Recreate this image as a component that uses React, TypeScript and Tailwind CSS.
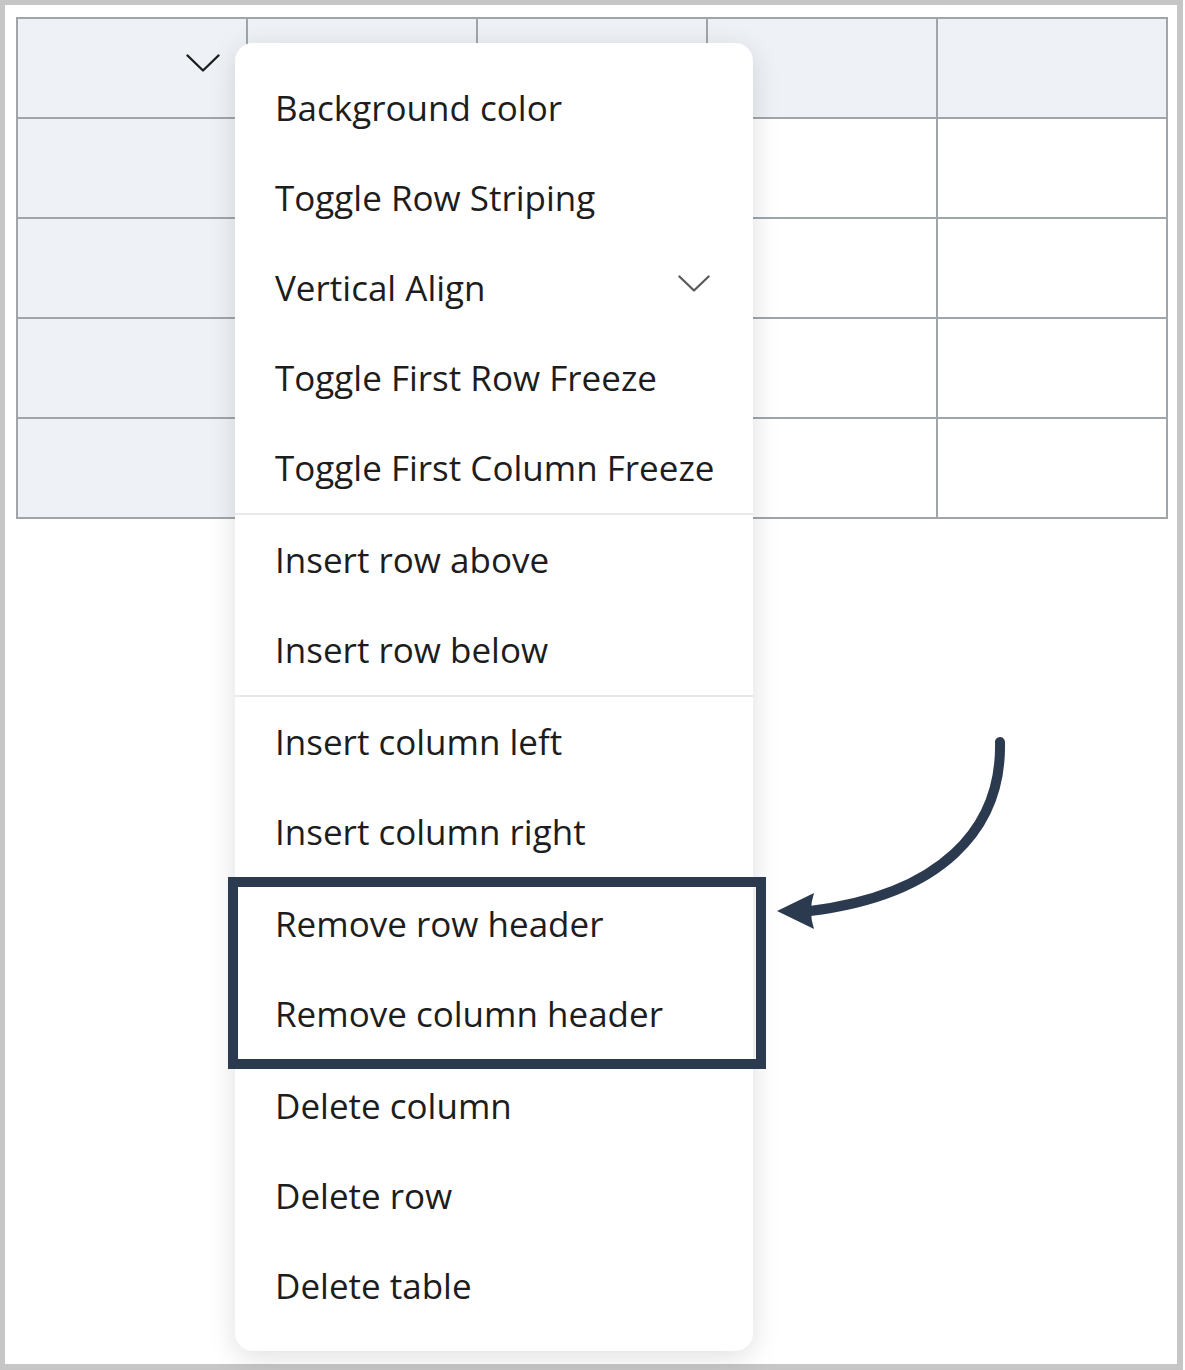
import { ReactNode } from 'react';

const ROWS = 5;
const COLS = 5;

type MenuEntry = { label: string; submenu?: boolean } | 'divider';

const menuEntries: MenuEntry[] = [
  { label: 'Background color' },
  { label: 'Toggle Row Striping' },
  { label: 'Vertical Align', submenu: true },
  { label: 'Toggle First Row Freeze' },
  { label: 'Toggle First Column Freeze' },
  'divider',
  { label: 'Insert row above' },
  { label: 'Insert row below' },
  'divider',
  { label: 'Insert column left' },
  { label: 'Insert column right' },
  'divider',
  { label: 'Remove row header' },
  { label: 'Remove column header' },
  'divider',
  { label: 'Delete column' },
  { label: 'Delete row' },
  { label: 'Delete table' },
];

function Chevron({ className }: { className?: string }) {
  return (
    <svg
      viewBox="0 0 34 18"
      className={className}
      fill="none"
      stroke="currentColor"
      strokeWidth={2.4}
      strokeLinecap="round"
      strokeLinejoin="round"
    >
      <path d="M1.5 1.5 L17 16.5 L32.5 1.5" />
    </svg>
  );
}

function Cell({ row, col, children }: { row: number; col: number; children?: ReactNode }) {
  const isHeader = row === 0 || col === 0;
  return (
    <div
      className={
        'relative h-[100px] border-r-2 border-b-2 border-[#a0a5aa] ' +
        (isHeader ? 'bg-[#eef2f7]' : 'bg-white')
      }
    >
      {children}
    </div>
  );
}

function TableGrid() {
  const cells = [];
  for (let r = 0; r < ROWS; r++) {
    for (let c = 0; c < COLS; c++) {
      cells.push(
        <Cell key={`${r}-${c}`} row={r} col={c}>
          {r === 0 && c === 0 && (
            <div className="flex justify-end pt-[35px] pr-[26px]">
              <Chevron className="w-[34px] h-[18px] text-[#1e1e1e]" />
            </div>
          )}
        </Cell>,
      );
    }
  }
  return (
    <div className="grid grid-cols-[repeat(5,230px)] w-[1152px] border-l-2 border-t-2 border-[#a0a5aa]">
      {cells}
    </div>
  );
}

function TableMenu() {
  return (
    <div className="absolute left-[235px] top-[43px] w-[518px] py-5 bg-white rounded-[18px] shadow-[0_6px_28px_rgba(0,0,0,0.13)]">
      {menuEntries.map((entry, i) =>
        entry === 'divider' ? (
          <div key={i} className="h-[2px] bg-[#e6e8eb]" />
        ) : (
          <div
            key={i}
            className="h-[90px] flex items-center justify-between pl-[40px] pr-[43px] text-[35px] text-[#1d1d1d] whitespace-nowrap"
          >
            <span>{entry.label}</span>
            {entry.submenu && <Chevron className="-mt-[10px] w-[32px] h-[17px] text-[#5a5a5a]" />}
          </div>
        ),
      )}
    </div>
  );
}

export default function App() {
  return (
    <div
      className="relative w-[1185px] h-[1370px] bg-white"
      style={{ fontFamily: '"Open Sans", "Noto Sans", sans-serif' }}
    >
      <div className="w-[1183px] h-[1370px] border-[5px] border-r-[6px] border-b-[6px] border-[#c6c6c6] pl-[11px] pt-[12px]">
        <TableGrid />
      </div>

      <TableMenu />

      {/* callout around the header actions */}
      <div className="absolute left-[228px] top-[877px] w-[538px] h-[192px] border-[10px] border-[#2c3a4f]" />

      <svg className="absolute left-[770px] top-[730px] w-[250px] h-[210px]" viewBox="770 730 250 210">
        <path
          d="M1000 742 C1002 830 940 895 810 911"
          fill="none"
          stroke="#2c3a4f"
          strokeWidth={10}
          strokeLinecap="round"
        />
        <path d="M777 911 L814 893 Q808 911 814 929 Z" fill="#2c3a4f" />
      </svg>
    </div>
  );
}
